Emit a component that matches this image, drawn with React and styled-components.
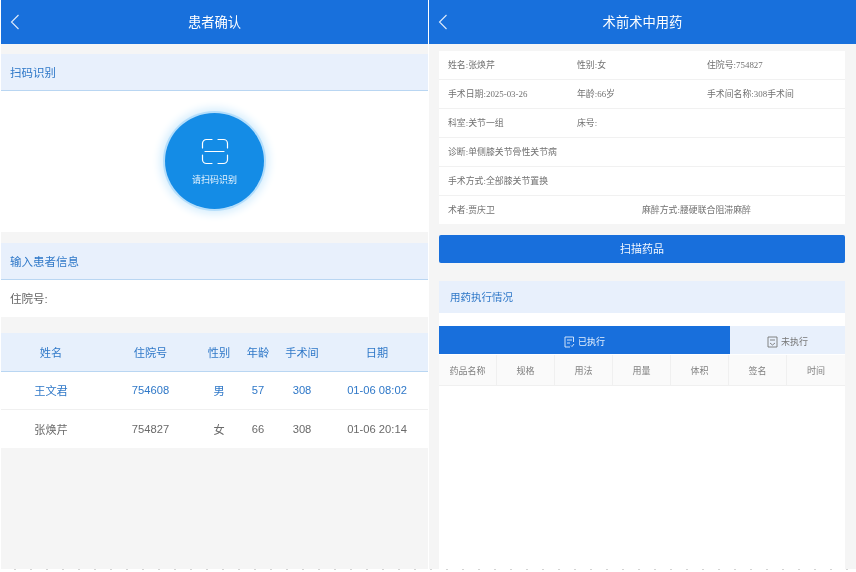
import React from "react";
import styled, { createGlobalStyle } from "styled-components";

const Global = createGlobalStyle`
  html, body { margin: 0; padding: 0; background: #fff; }
  body { font-family: "Liberation Sans", "Noto Sans CJK SC", sans-serif; width: 856px; height: 572px; overflow: hidden; }
`;
const Page = styled.div`
  width: 856px; height: 572px; display: flex; flex-direction: column; background: #fff; overflow: hidden;
  filter: blur(0.35px);
`;
const Panels = styled.div`
  height: 569px; display: flex; padding-left: 1px; gap: 1px; overflow: hidden;
`;
const Dots = styled.div`
  height: 1px; flex: none;
  background: repeating-linear-gradient(90deg, #fff 0 14px, #d4d4d4 14px 16px);
`;
const Panel = styled.div`
  width: ${p => p.$w}px; flex: none; background: #f5f5f5; display: flex; flex-direction: column;
`;
const Header = styled.header`
  height: 44px; flex: none; box-sizing: border-box; background: #1870dc; color: #fff; display: flex; align-items: center; justify-content: center;
  position: relative; font-size: 13.3px; padding-bottom: 2px;
`;
const Back = styled.svg`
  position: absolute; left: 9px; top: 14px; width: 11px; height: 17px;
  fill: none; stroke: #dfebfb; stroke-width: 1.1;
`;
const SectionTitle = styled.div`
  height: ${p => p.$h || 36}px; flex: none; box-sizing: ${p => (p.$h ? "border-box" : "content-box")}; background: #e8f0fc; color: #2f78c8; font-size: ${p => p.$size || 11.5}px; display: flex; align-items: center;
  padding-left: ${p => p.$pad || 9}px; padding-bottom: ${p => (p.$h ? 2 : 0)}px; border-bottom: ${p => (p.$line ? "1px solid #b9d6f2" : "none")};
`;
const ScanArea = styled.div`
  height: 141px; flex: none; background: #fff; display: flex; align-items: center; justify-content: center;
`;
const ScanCircle = styled.div`
  width: 99px; height: 96px; border-radius: 50%; background: #148ce6; color: #e8f4fd; font-size: 9px;
  display: flex; flex-direction: column; align-items: center; gap: 8px; padding-top: 25px; box-sizing: border-box;
  box-shadow: 0 0 0 2px #b5defb, 0 0 8px 5px #d6eefd;
  margin-top: -2px;
`;
const ScanIcon = styled.svg`
  width: 28px; height: 27px; fill: none; stroke: #fff; stroke-width: 1.2; stroke-linecap: round;
`;
const Gap = styled.div`
  height: ${p => p.$h}px; flex: none;
`;
const InputRow = styled.div`
  height: 37px; flex: none; box-sizing: border-box; background: #fff; color: #666; font-size: 11.5px; display: flex; align-items: center; padding: 0 0 2px 9px;
`;
const Grid = styled.div`
  display: grid; grid-template-columns: 100px 99px 38px 40px 48px 102px; flex: none; height: ${p => p.$h}px; align-items: center;
  justify-items: center; font-size: 11.2px;
  background: ${p => p.$head ? "#e7f0fc" : "#fff"};
  color: ${p => p.$color};
  border-bottom: ${p => p.$border || "none"};
  padding-bottom: ${p => p.$head ? 0 : 1}px;
  box-sizing: border-box;
`;
const InfoCard = styled.div`
  margin: 7px 11px 0 10px; background: #fff; flex: none; font-family: "Liberation Serif", "Noto Sans CJK SC", serif; font-size: 8.9px; color: #717171;
`;
const InfoRow = styled.div`
  height: ${p => p.$last ? 28 : 29}px; box-sizing: border-box; display: grid; grid-template-columns: ${p => p.$cols || "129px 130px 1fr"}; align-items: center; padding: 0 0 1px 9px;
  border-bottom: ${p => p.$last ? "none" : "1px solid #f1f1f1"};
`;
const ScanButton = styled.button`
  display: flex; align-items: center; justify-content: center; margin: 11px 11px 0 10px; height: 28px; flex: none; width: 406px; border: none; border-radius: 2px;
  background: #186fdc; color: #f0f6fe; font-family: inherit; font-size: 11px; padding: 0 0 2px;
`;
const Sheet = styled.div`
  margin: 18px 11px 0 10px; flex: 1; background: #fff; display: flex; flex-direction: column;
`;
const Spacer = styled.div`
  height: 13px; flex: none;
`;
const Tabs = styled.div`
  display: flex; height: 28px; flex: none;
`;
const Tab = styled.div`
  width: ${p => p.$w}px; flex: none; display: flex; align-items: center; justify-content: center; gap: 3px; font-size: 9px; box-sizing: border-box; padding-top: 3px;
  background: ${p => p.$on ? "#186fdc" : "#e8f0fc"};
  color: ${p => p.$on ? "#e4effc" : "#777"};
`;
const TabIcon = styled.svg`
  width: 11px; height: 12px; fill: none; stroke: currentColor; stroke-width: 0.9;
`;
const DrugHead = styled.div`
  display: grid; grid-template-columns: repeat(7, 1fr); height: 31px; flex: none; margin-top: 1px; background: #fafafa; box-sizing: border-box; border-bottom: 1px solid #f0f0f0;
`;
const DrugCell = styled.div`
  display: flex; align-items: center; justify-content: center; font-size: 9px; color: #808080;
  border-right: ${p => p.$last ? "none" : "1px solid #f0f0f0"};
`;

const BackIcon = () => <Back viewBox="0 0 11 17"><path d="M8.500 1 1.500 8l7 7" /></Back>;
const columns = ["姓名", "住院号", "性别", "年龄", "手术间", "日期"];
const rows = [
  { cells: ["王文君", "754608", "男", "57", "308", "01-06 08:02"], color: "#2f78c8", border: "1px solid #f0f0f0" },
  { cells: ["张焕芹", "754827", "女", "66", "308", "01-06 20:14"], color: "#6a6a6a" },
];
const info = [
  { cells: ["姓名:张焕芹", "性别:女", "住院号:754827"] },
  { cells: ["手术日期:2025-03-26", "年龄:66岁", "手术间名称:308手术间"] },
  { cells: ["科室:关节一组", "床号:", ""] },
  { cells: ["诊断:单侧膝关节骨性关节病"], cols: "1fr" },
  { cells: ["手术方式:全部膝关节置换"], cols: "1fr" },
  { cells: ["术者:贾庆卫", "麻醉方式:腰硬联合阻滞麻醉"], cols: "194px 1fr", last: true },
];
const drugs = ["药品名称", "规格", "用法", "用量", "体积", "签名", "时间"];

export default function App() {
  return (
    <>
      <Global />
      <Page>
        <Panels>
          <Panel $w={427}>
            <Header><BackIcon />患者确认</Header>
            <Gap $h={10} />
            <SectionTitle $line>扫码识别</SectionTitle>
            <ScanArea>
              <ScanCircle>
                <ScanIcon viewBox="0 0 28 27">
                  <path d="M11 1.500H5.500a4 4 0 0 0-4 4V10M17 1.500h5.500a4 4 0 0 1 4 4V10M4 13.500h19M1.500 17v4.500a4 4 0 0 0 4 4H11M26.500 17v4.500a4 4 0 0 1-4 4H17" />
                </ScanIcon>
                请扫码识别
              </ScanCircle>
            </ScanArea>
            <Gap $h={11} />
            <SectionTitle $line>输入患者信息</SectionTitle>
            <InputRow>住院号:</InputRow>
            <Gap $h={16} />
            <Grid $head $h={39} $color="#2f78c8" $border="1px solid #b9d6f2">
              {columns.map(c => <span key={c}>{c}</span>)}
            </Grid>
            {rows.map(r => (
              <Grid key={r.cells[0]} $h={38} $color={r.color} $border={r.border}>
                {r.cells.map(c => <span key={c}>{c}</span>)}
              </Grid>
            ))}
          </Panel>
          <Panel $w={427}>
            <Header><BackIcon />术前术中用药</Header>
            <InfoCard>
              {info.map((row, i) => (
                <InfoRow key={i} $cols={row.cols} $last={row.last}>
                  {row.cells.map((c, j) => <span key={j}>{c}</span>)}
                </InfoRow>
              ))}
            </InfoCard>
            <ScanButton>扫描药品</ScanButton>
            <Sheet>
              <SectionTitle $pad={11} $h={32} $size={10.5}>用药执行情况</SectionTitle>
              <Spacer />
              <Tabs>
                <Tab $on $w={291}>
                  <TabIcon viewBox="0 0 11 12"><path d="M9.500 6V1H1v10h5M3 4h5M3 7h3M7 9.500l1 1 2-2.500" /></TabIcon>
                  已执行
                </Tab>
                <Tab $w={115}>
                  <TabIcon viewBox="0 0 11 12"><path d="M1 1h9v10H1zM3 4h5M3 7l2.500 2L8 7" /></TabIcon>
                  未执行
                </Tab>
              </Tabs>
              <DrugHead>
                {drugs.map((d, i) => <DrugCell key={d} $last={i === 6}>{d}</DrugCell>)}
              </DrugHead>
            </Sheet>
          </Panel>
        </Panels>
        <Dots />
      </Page>
    </>
  );
}
